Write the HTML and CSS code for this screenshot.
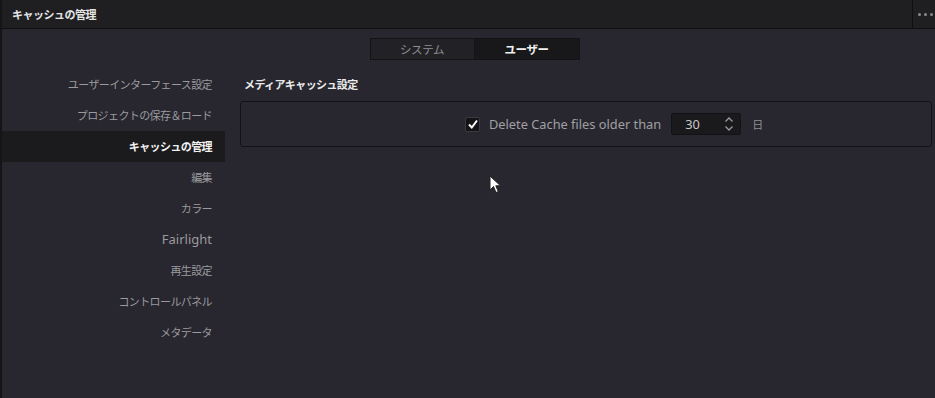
FILE: index.html
```html
<!DOCTYPE html>
<html lang="ja">
<head>
    <meta charset="UTF-8">
    <title>キャッシュの管理</title>
    <link rel="stylesheet" href="styles.css">
</head>
<body>
    <div class="window">
        <header class="titlebar">
            <span class="title">キャッシュの管理</span>
            <span class="more"><i></i><i></i><i></i></span>
        </header>
        <div class="tabs">
            <button class="tab">システム</button>
            <button class="tab active">ユーザー</button>
        </div>
        <div class="main">
            <nav class="sidebar">
                <a class="nav-item">ユーザーインターフェース設定</a>
                <a class="nav-item">プロジェクトの保存＆ロード</a>
                <a class="nav-item selected">キャッシュの管理</a>
                <a class="nav-item">編集</a>
                <a class="nav-item">カラー</a>
                <a class="nav-item latin">Fairlight</a>
                <a class="nav-item">再生設定</a>
                <a class="nav-item">コントロールパネル</a>
                <a class="nav-item">メタデータ</a>
            </nav>
            <section class="content">
                <h2>メディアキャッシュ設定</h2>
                <div class="panel">
                    <label class="check">
                        <span class="box">
                            <svg width="12" height="12" viewBox="0 0 12 12"><path d="M2 6.5 L4.8 9.5 L10 2.5" fill="none" stroke="#fff" stroke-width="2"/></svg>
                        </span>
                        Delete Cache files older than
                    </label>
                    <div class="spin">
                        <span class="value">30</span>
                        <svg width="10" height="16" viewBox="0 0 10 16"><path d="M1.5 5.5 L5 2 L8.5 5.5 M1.5 10.5 L5 14 L8.5 10.5" fill="none" stroke="#9a9a9e" stroke-width="1.3"/></svg>
                    </div>
                    <span class="unit">日</span>
                </div>
            </section>
        </div>
        <svg class="cursor" width="14" height="20" viewBox="0 0 14 20"><path d="M1 1 L1 15 L4.5 11.5 L7 17.5 L9.3 16.5 L6.8 10.8 L11.5 10.8 Z" fill="#fff" stroke="#222" stroke-width="1"/></svg>
    </div>
</body>
</html>
```

FILE: styles.css
```css
* {
    margin: 0;
    padding: 0;
    box-sizing: border-box;
}

body {
    background: #28272f;
    font-family: "Noto Sans", "Noto Sans CJK JP", sans-serif;
    width: 935px;
    height: 398px;
    overflow: hidden;
}

.window {
    position: relative;
    height: 398px;
    border-left: 2px solid #151517;
}

.titlebar {
    display: flex;
    align-items: center;
    justify-content: space-between;
    height: 29px;
    background: #1f1f22;
    border-bottom: 1px solid #0f0f11;
}

.title {
    padding-left: 10px;
    color: #e6e6e6;
    font-size: 11px;
    font-weight: 700;
    letter-spacing: -0.5px;
}

.more {
    display: flex;
    align-items: center;
    gap: 3px;
    height: 100%;
    padding-left: 5px;
    border-left: 1px solid #0f0f11;
    width: 23px;
}

.more i {
    width: 3px;
    height: 3px;
    border-radius: 50%;
    background: #8a8a8e;
}

.tabs {
    display: flex;
    justify-content: center;
    padding: 9px 0 9px 12px;
}

.tab {
    width: 105px;
    height: 22px;
    border: 1px solid #141416;
    background: #222226;
    color: #8e8e92;
    font-family: inherit;
    font-size: 11.5px;
    letter-spacing: -0.4px;
}

.tab + .tab {
    border-left: none;
}

.tab.active {
    background: #18181b;
    color: #f0f0f0;
    font-weight: 700;
}

.main {
    display: flex;
}

.sidebar {
    display: flex;
    flex-direction: column;
    width: 223px;
}

.nav-item {
    display: block;
    height: 31px;
    line-height: 31px;
    padding-right: 13px;
    text-align: right;
    color: #9a9a9e;
    font-size: 11px;
    letter-spacing: -0.6px;
}

.nav-item.latin {
    font-size: 13px;
    letter-spacing: 0;
}

.nav-item.selected {
    background: #1b1b1e;
    color: #f2f2f2;
    font-weight: 700;
}

.content {
    flex: 1;
    padding: 0 3px 0 15px;
}

.content h2 {
    height: 32px;
    line-height: 32px;
    padding-left: 4px;
    color: #ececec;
    font-size: 11px;
    font-weight: 700;
    letter-spacing: -0.6px;
}

.panel {
    display: flex;
    align-items: center;
    height: 46px;
    padding-left: 224px;
    border: 1px solid #121214;
    border-radius: 3px;
}

.check {
    display: flex;
    align-items: center;
    gap: 9px;
    color: #a0a0a4;
    font-size: 12.8px;
}

.box {
    display: flex;
    align-items: center;
    justify-content: center;
    width: 15px;
    height: 15px;
    background: #141416;
    border: 1px solid #3a3a40;
    border-radius: 2px;
}

.spin {
    display: flex;
    align-items: center;
    justify-content: space-between;
    width: 70px;
    height: 22px;
    margin-left: 10px;
    padding: 0 6px 0 13px;
    background: #1a1a1d;
    border: 1px solid #131315;
    border-radius: 2px;
    color: #c8c8cc;
    font-size: 12.8px;
}

.unit {
    margin-left: 11px;
    color: #8e8e92;
    font-size: 11px;
}

.cursor {
    position: absolute;
    left: 487px;
    top: 175px;
}
```
